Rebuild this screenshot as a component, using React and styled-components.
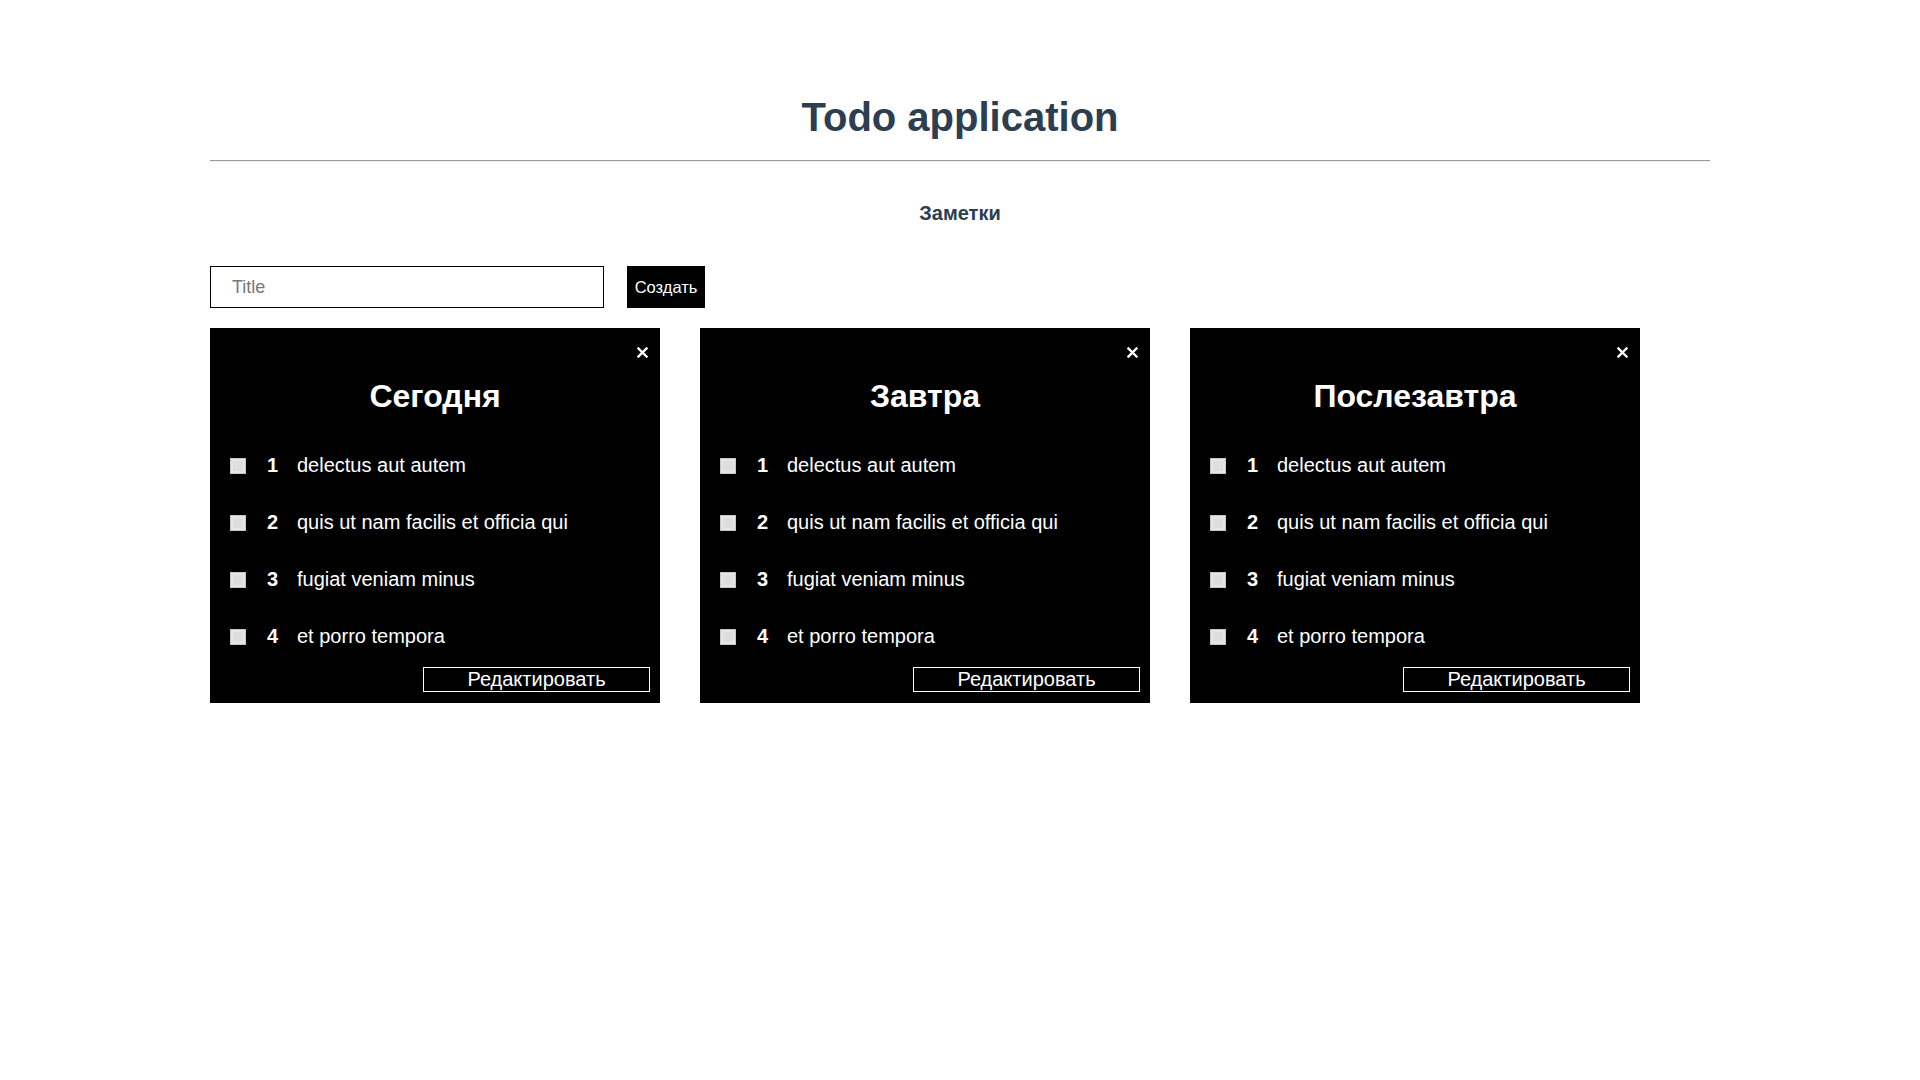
import React from "react";
import styled, { createGlobalStyle } from "styled-components";

const Global = createGlobalStyle`
  html, body { margin: 0; padding: 0; background: #fff; }
  body { font-family: "Liberation Sans", Arial, sans-serif; color: #2c3e50; }
  * { box-sizing: border-box; }
`;

const Page = styled.div`
  width: 1500px;
  margin: 0 auto;
  padding-top: 94px;
`;

const Heading = styled.h1`
  margin: 0;
  font-size: 40px;
  line-height: 46px;
  font-weight: 700;
  text-align: center;
  color: #2c3e50;
`;

const Rule = styled.hr`
  margin: 20px 0 0;
  border: 0;
  border-top: 1px solid #9a9a9a;
  border-bottom: 1px solid #eeeeee;
  height: 0;
`;

const SubHeading = styled.h3`
  margin: 40px 0 0;
  font-size: 20px;
  line-height: 23px;
  font-weight: 700;
  text-align: center;
  color: #2c3e50;
`;

const Toolbar = styled.div`
  display: flex;
  gap: 23px;
  margin-top: 41px;
`;

const TitleInput = styled.input`
  width: 394px;
  height: 42px;
  border: 1px solid #000;
  border-radius: 0;
  padding: 0 0 0 21px;
  font-family: "Liberation Sans", Arial, sans-serif;
  font-size: 18px;
  color: #333;
  outline: none;
  &::placeholder { color: #777; }
`;

const CreateButton = styled.button`
  width: 78px;
  height: 42px;
  border: 0;
  border-radius: 0;
  background: #000;
  color: #fff;
  font-family: "Liberation Sans", Arial, sans-serif;
  font-size: 16.5px;
  padding: 0;
  cursor: pointer;
`;

const Board = styled.div`
  display: flex;
  gap: 40px;
  margin-top: 20px;
`;

const Card = styled.section`
  position: relative;
  width: 450px;
  height: 375px;
  background: #000;
  color: #fff;
  display: flex;
  flex-direction: column;
  padding: 50px 10px 11px 20px;
`;

const CloseButton = styled.button`
  position: absolute;
  top: 16px;
  right: 10px;
  width: 16px;
  height: 16px;
  padding: 0;
  border: 0;
  background: transparent;
  display: flex;
  align-items: center;
  justify-content: center;
  cursor: pointer;
`;

const CardTitle = styled.h2`
  margin: 0 10px 0 0;
  font-size: 32px;
  line-height: 37px;
  font-weight: 700;
  text-align: center;
  color: #fff;
`;

const List = styled.ul`
  list-style: none;
  margin: 22px 0 0;
  padding: 0;
`;

const Item = styled.li`
  height: 57px;
  display: flex;
  align-items: center;
  font-size: 20px;
`;

const Box = styled.span`
  width: 16px;
  height: 16px;
  margin-right: 21px;
  background: #dedede;
  border: 1px solid #c6c6c6;
  box-shadow: inset 0 0 0 2px #e6e6e6;
  flex-shrink: 0;
`;

const Num = styled.span`
  width: 30px;
  font-weight: 700;
`;

const ItemText = styled.span`
  color: #fff;
`;

const Footer = styled.div`
  display: flex;
  justify-content: flex-end;
  margin-top: 2px;
`;

const EditButton = styled.button`
  width: 227px;
  height: 25px;
  background: #000;
  color: #fff;
  border: 1px solid #fff;
  border-radius: 0;
  font-family: "Liberation Sans", Arial, sans-serif;
  font-size: 20px;
  line-height: 21px;
  padding: 0;
  cursor: pointer;
`;

const todos = [
  "delectus aut autem",
  "quis ut nam facilis et officia qui",
  "fugiat veniam minus",
  "et porro tempora",
];

const notes = ["Сегодня", "Завтра", "Послезавтра"];

const CloseIcon = () => (
  <svg width="11" height="11" viewBox="0 0 11 11">
    <path d="M1.5 1.5 L9.5 9.5 M9.5 1.5 L1.5 9.5" stroke="#fff" strokeWidth="2.4" strokeLinecap="square" />
  </svg>
);

export default function App() {
  return (
    <>
      <Global />
      <Page>
        <Heading>Todo application</Heading>
        <Rule />
        <SubHeading>Заметки</SubHeading>
        <Toolbar>
          <TitleInput placeholder="Title" />
          <CreateButton>Создать</CreateButton>
        </Toolbar>
        <Board>
          {notes.map((n) => (
            <Card key={n}>
              <CloseButton aria-label="close">
                <CloseIcon />
              </CloseButton>
              <CardTitle>{n}</CardTitle>
              <List>
                {todos.map((t, i) => (
                  <Item key={t}>
                    <Box />
                    <Num>{i + 1}</Num>
                    <ItemText>{t}</ItemText>
                  </Item>
                ))}
              </List>
              <Footer>
                <EditButton>Редактировать</EditButton>
              </Footer>
            </Card>
          ))}
        </Board>
      </Page>
    </>
  );
}
